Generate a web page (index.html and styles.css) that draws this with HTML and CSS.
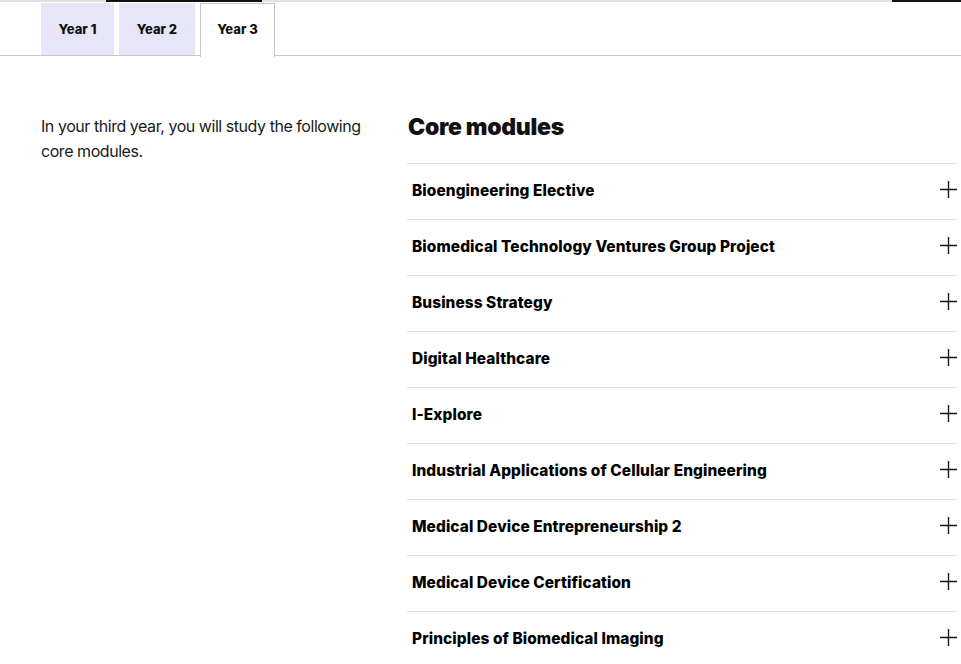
FILE: index.html
```html
<!DOCTYPE html>
<html lang="en">
<head>
<meta charset="utf-8">
<title>Year 3 modules</title>
<link rel="stylesheet" href="styles.css">
</head>
<body>
<div class="topbar">
  <span class="seg-gap seg-a"></span>
  <span class="seg-black seg-b"></span>
  <span class="seg-gap seg-c"></span>
  <span class="seg-black seg-d"></span>
</div>
<div class="tabs">
  <button class="tab tab-1">Year 1</button>
  <button class="tab tab-2">Year 2</button>
  <button class="tab tab-3 active">Year 3</button>
</div>
<main class="content">
  <div class="intro">
    <p>In your third year, you will study the following core modules.</p>
  </div>
  <section class="modules">
    <h2>Core modules</h2>
    <ul class="accordion">
      <li class="item"><span class="name">Bioengineering Elective</span><svg class="plus" viewBox="0 0 17 17"><path d="M8.5 0V17M0 8.5H17"/></svg></li>
      <li class="item"><span class="name">Biomedical Technology Ventures Group Project</span><svg class="plus" viewBox="0 0 17 17"><path d="M8.5 0V17M0 8.5H17"/></svg></li>
      <li class="item"><span class="name">Business Strategy</span><svg class="plus" viewBox="0 0 17 17"><path d="M8.5 0V17M0 8.5H17"/></svg></li>
      <li class="item"><span class="name">Digital Healthcare</span><svg class="plus" viewBox="0 0 17 17"><path d="M8.5 0V17M0 8.5H17"/></svg></li>
      <li class="item"><span class="name">I-Explore</span><svg class="plus" viewBox="0 0 17 17"><path d="M8.5 0V17M0 8.5H17"/></svg></li>
      <li class="item"><span class="name">Industrial Applications of Cellular Engineering</span><svg class="plus" viewBox="0 0 17 17"><path d="M8.5 0V17M0 8.5H17"/></svg></li>
      <li class="item"><span class="name">Medical Device Entrepreneurship 2</span><svg class="plus" viewBox="0 0 17 17"><path d="M8.5 0V17M0 8.5H17"/></svg></li>
      <li class="item"><span class="name">Medical Device Certification</span><svg class="plus" viewBox="0 0 17 17"><path d="M8.5 0V17M0 8.5H17"/></svg></li>
      <li class="item"><span class="name">Principles of Biomedical Imaging</span><svg class="plus" viewBox="0 0 17 17"><path d="M8.5 0V17M0 8.5H17"/></svg></li>
    </ul>
  </section>
</main>
</body>
</html>
```
FILE: styles.css
```css
* { box-sizing: border-box; }
html, body { margin: 0; padding: 0; background: #fff; }
body {
  font-family: Inter, "Liberation Sans", Arial, sans-serif;
  color: #111;
  overflow: hidden;
}
.topbar {
  display: flex;
  height: 2px;
  background: #e2e2e2;
}
.seg-a { width: 106px; }
.seg-b { width: 156px; }
.seg-c { flex: 1; }
.seg-d { width: 69px; }
.seg-black { background: #111; height: 2px; }
.tabs {
  display: flex;
  gap: 5px;
  padding: 1px 0 0 41px;
  border-bottom: 1px solid #c6c8cc;
  height: 54px;
}
.tab {
  font-family: inherit;
  font-size: 13px;
  font-weight: 800;
  color: #111;
  background: #e6e6f8;
  border: 0;
  height: 52px;
  padding: 0;
  text-align: center;
  cursor: pointer;
}
.tab-1 { width: 73px; }
.tab-2 { width: 76px; }
.tab-3 { width: 75px; }
.tab.active {
  background: #fff;
  border: 1px solid #c3c6cb;
  border-bottom: 0;
  height: 54px;
  padding-bottom: 3px;
}
.content {
  display: grid;
  grid-template-columns: 366px 550px;
  padding: 56px 4px 0 41px;
}
.intro p {
  margin: 2px 0 0;
  font-size: 16px;
  line-height: 25px;
  width: 330px;
  letter-spacing: -0.45px;
  color: #1a1a1a;
}
.modules h2 {
  margin: 0 0 21px 1px;
  font-size: 23px;
  line-height: 30px;
  font-weight: 900;
  color: #111;
  letter-spacing: -0.3px;
}
.accordion {
  list-style: none;
  margin: 0;
  padding: 0;
}
.item {
  display: flex;
  align-items: center;
  justify-content: space-between;
  height: 56px;
  border-top: 1px solid #e2e2e2;
  padding: 0 0 2px 5px;
}
.name {
  font-size: 15.4px;
  font-weight: 800;
  color: #000;
  letter-spacing: 0.1px;
}
.plus {
  width: 17px;
  height: 17px;
  margin-bottom: 3px;
  flex: none;
}
.plus path {
  stroke: #1a1a1a;
  stroke-width: 1.4;
  fill: none;
}
```
